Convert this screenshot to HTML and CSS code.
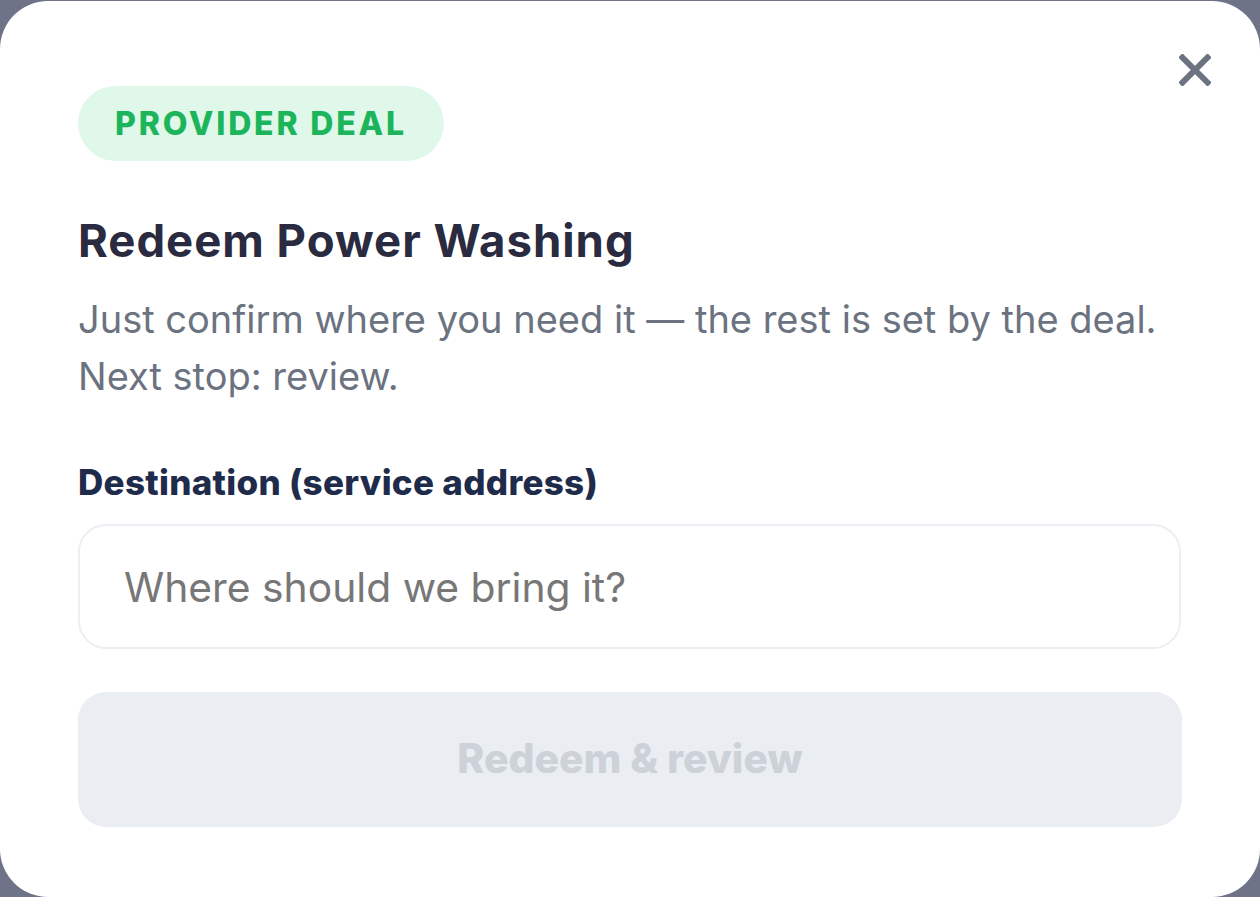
FILE: index.html
```html
<!DOCTYPE html>
<html lang="en">
<head>
<meta charset="utf-8">
<title>Redeem Power Washing</title>
<link rel="stylesheet" href="styles.css">
</head>
<body>
<div class="backdrop">
  <div class="modal" role="dialog" aria-labelledby="title">
    <button class="close" aria-label="Close">
      <svg width="32" height="32" viewBox="0 0 32 32"><path d="M3.5 3.5 L28.5 28.5 M28.5 3.5 L3.5 28.5" stroke="#6b7280" stroke-width="6" stroke-linecap="square"/></svg>
    </button>
    <span class="badge">PROVIDER DEAL</span>
    <h1 class="title" id="title">Redeem Power Washing</h1>
    <p class="desc">Just confirm where you need it — the rest is set by the deal.<br>Next stop: review.</p>
    <label class="label" for="dest">Destination (service address)</label>
    <input class="input" id="dest" type="text" placeholder="Where should we bring it?">
    <button class="cta" disabled>Redeem &amp; review</button>
  </div>
</div>
</body>
</html>
```

FILE: styles.css
```css
* { box-sizing: border-box; }
html, body { margin: 0; padding: 0; }
body {
  background: #6f7388;
  font-family: Inter, "Noto Sans", sans-serif;
}
.backdrop {
  width: 1260px;
  height: 897px;
  padding-top: 1px;
  overflow: hidden;
}
.modal {
  position: relative;
  background: #ffffff;
  width: 1260px;
  height: 896px;
  border-radius: 48px;
  padding: 85px 78px 0 78px;
  display: flex;
  flex-direction: column;
  align-items: flex-start;
}
.close {
  position: absolute;
  top: 53px;
  right: 49px;
  width: 32px;
  height: 32px;
  padding: 0;
  border: 0;
  background: none;
  display: flex;
}
.badge {
  display: inline-flex;
  align-items: center;
  height: 75px;
  padding: 0 37px 0 37px;
  border-radius: 38px;
  background: #e0f8ea;
  color: #1db55b;
  font-weight: 800;
  font-size: 32px;
  letter-spacing: 2.8px;
}
.title {
  margin: 52px 0 0 0;
  font-size: 45.5px;
  line-height: 56px;
  font-weight: 700;
  letter-spacing: 1px;
  color: #2a2a40;
}
.desc {
  margin: 22px 0 0 0;
  font-size: 38px;
  line-height: 57px;
  color: #6b7280;
}
.label {
  margin-top: 57px;
  font-size: 35px;
  line-height: 40px;
  font-weight: 800;
  letter-spacing: 0.3px;
  color: #1f2b4b;
}
.input {
  margin-top: 22px;
  width: 1103px;
  height: 125px;
  border: 2px solid #eceef4;
  border-radius: 28px;
  padding: 0 44px;
  font-family: Inter, "Noto Sans", sans-serif;
  font-size: 40.8px;
  color: #333;
  background: #fff;
  outline: none;
}
.input::placeholder { color: #777777; }
.cta {
  margin-top: 43px;
  width: 1104px;
  height: 135px;
  border: 0;
  border-radius: 28px;
  padding: 0 0 4px 0;
  background: #eaedf1;
  color: #cdd1d8;
  font-family: Inter, "Noto Sans", sans-serif;
  font-size: 40.8px;
  font-weight: 800;
}
```
